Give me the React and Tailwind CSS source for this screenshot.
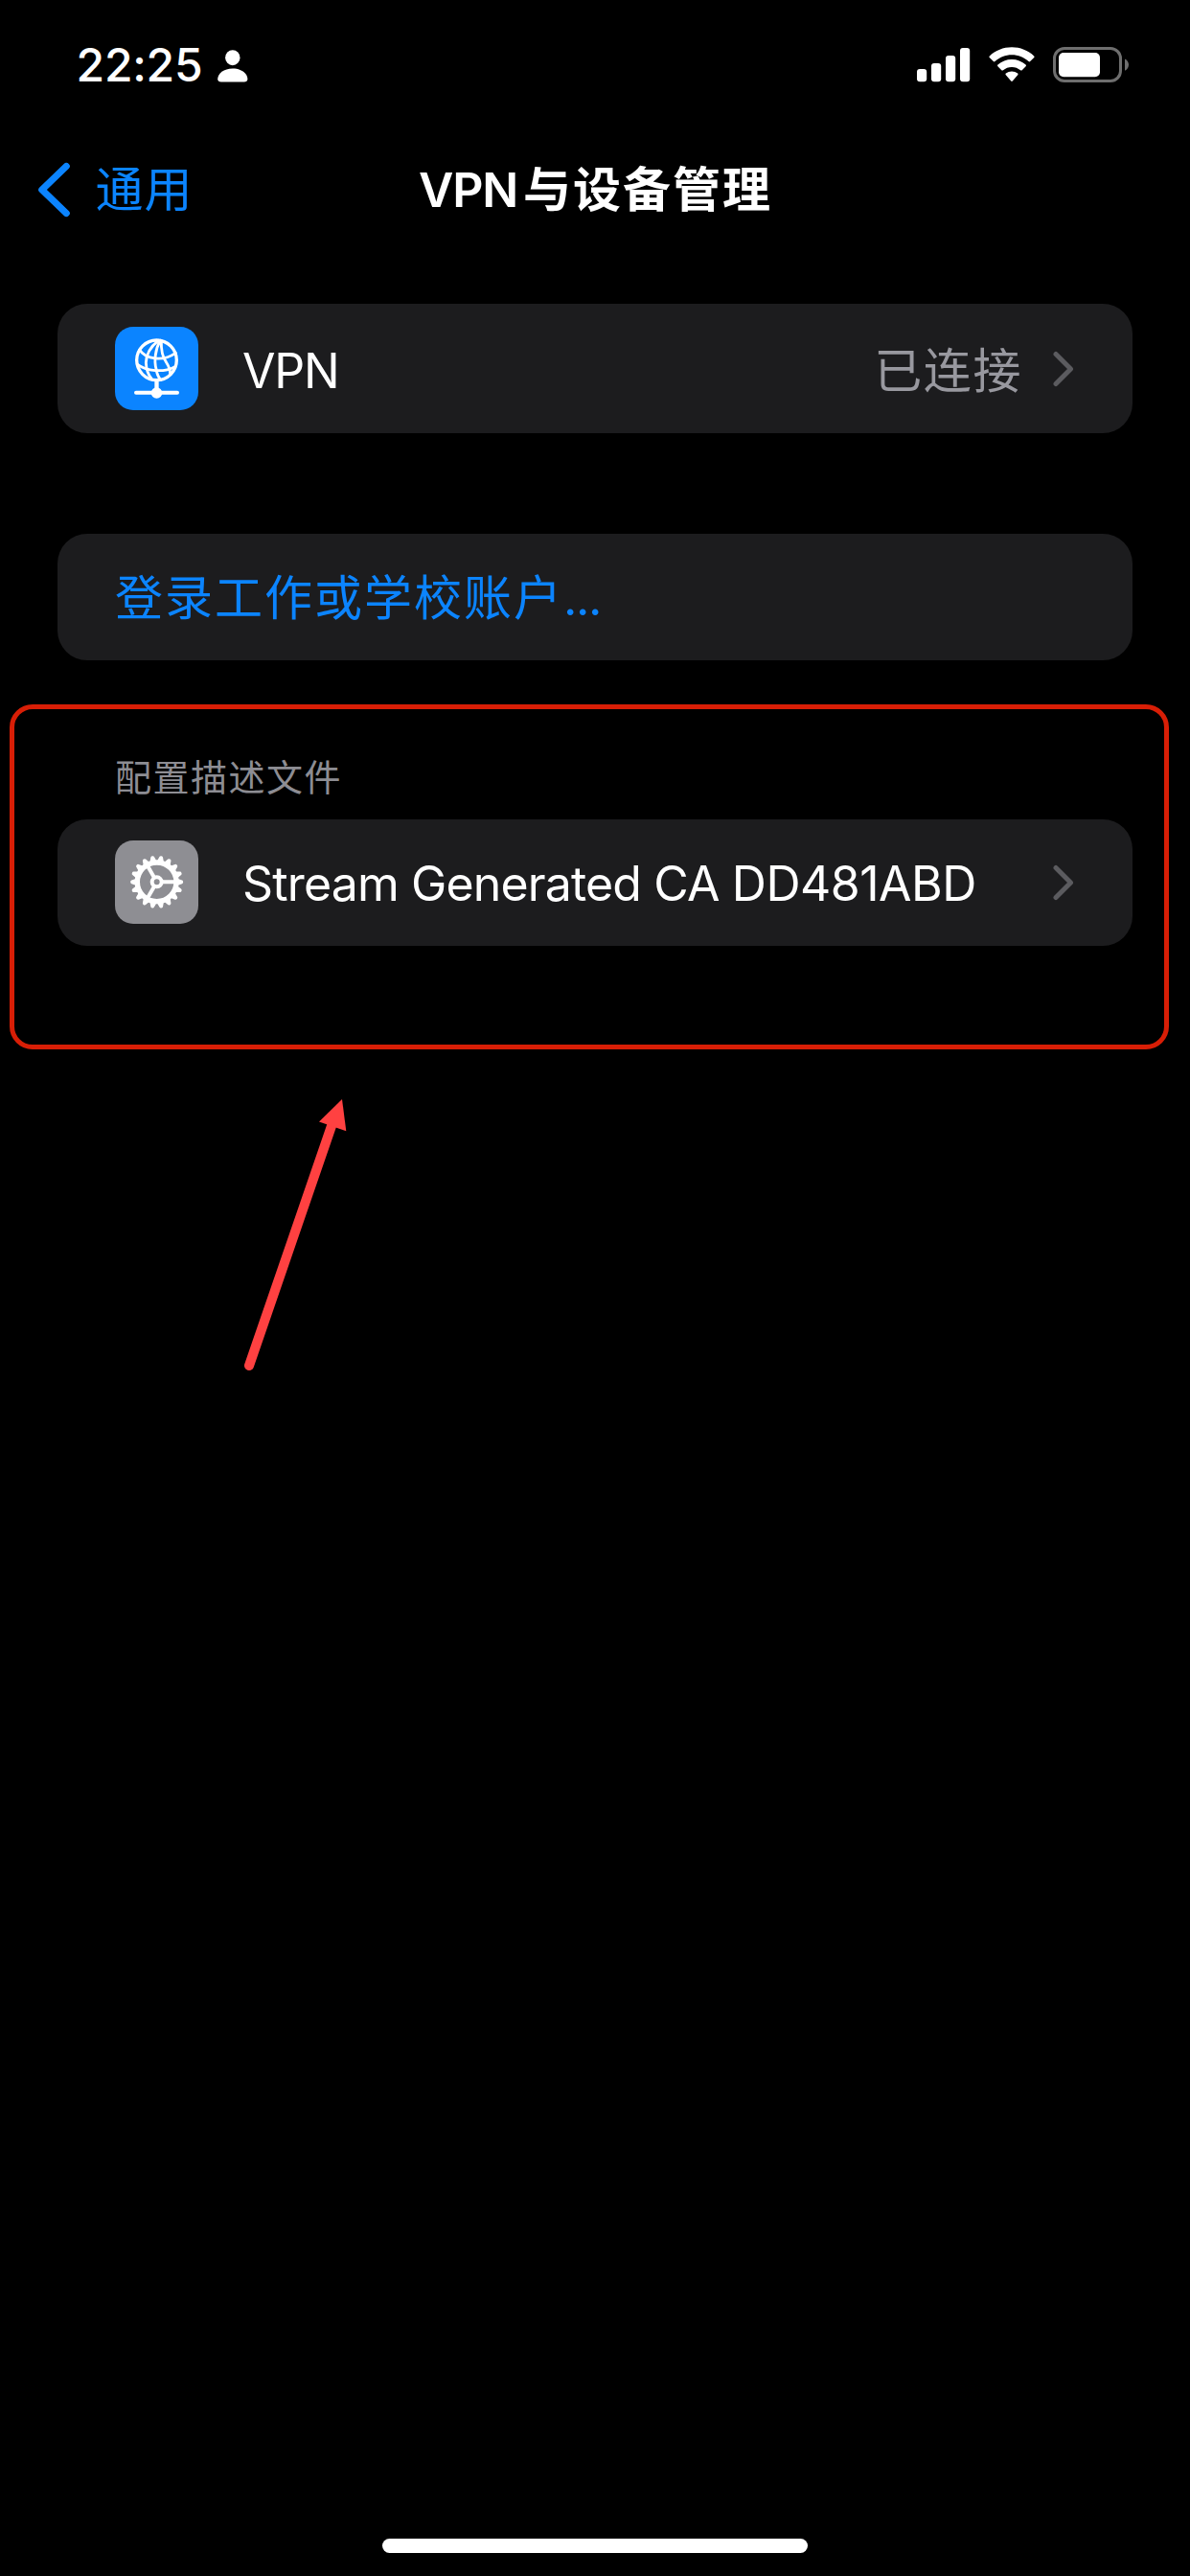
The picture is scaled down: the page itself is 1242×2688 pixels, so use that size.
const FONT = "font-[Inter,'Noto_Sans_CJK_SC',sans-serif]";

function PersonIcon() {
  return (
    <svg width="32" height="34" viewBox="0 0 32 34" fill="#fff" className="mt-[51.5px]">
      <ellipse cx="15.8" cy="8.2" rx="7.7" ry="8" />
      <path d="M0.2 30.6C0.2 24.6 6.6 19.4 15.8 19.4S31.4 24.6 31.4 30.6C31.4 32.6 30 33.6 27.8 33.6H3.8C1.6 33.6 0.2 32.6 0.2 30.6Z" />
    </svg>
  );
}

function SignalIcon() {
  return (
    <svg width="56" height="36" viewBox="0 0 56 36" fill="#fff">
      <rect x="0" y="22" width="10.2" height="13.2" rx="3" />
      <rect x="15" y="16" width="10.2" height="19.2" rx="3" />
      <rect x="30" y="8" width="10.2" height="27.2" rx="3" />
      <rect x="45" y="0" width="10.2" height="35.2" rx="3" />
    </svg>
  );
}

function WifiIcon() {
  return (
    <svg width="48" height="37" viewBox="0 0 48 37" fill="#fff">
      <path d="M24 0.2C32.8 0.2 41 3.5 47.2 9.4C47.7 9.9 47.7 10.6 47.3 11.1L43.2 15.1C42.7 15.6 42 15.6 41.5 15.1C36.8 10.7 30.6 8.2 24 8.2S11.2 10.7 6.5 15.1C6 15.6 5.3 15.6 4.8 15.1L0.7 11.1C0.3 10.6 0.3 9.9 0.8 9.4C7 3.5 15.2 0.2 24 0.2Z" />
      <path d="M24 13C29.5 13 34.6 15 38.6 18.6C39.1 19.1 39.1 19.8 38.6 20.3L34.7 24.2C34.2 24.7 33.5 24.7 33 24.3C30.5 22.1 27.4 20.9 24 20.9S17.5 22.1 15 24.3C14.5 24.7 13.8 24.7 13.3 24.2L9.4 20.3C8.9 19.8 8.9 19.1 9.4 18.6C13.4 15 18.5 13 24 13Z" />
      <path d="M24 25.6C26.3 25.6 28.4 26.3 30.1 27.6C30.6 28 30.7 28.7 30.2 29.2L24.8 35.6C24.4 36.1 23.6 36.1 23.2 35.6L17.8 29.2C17.3 28.7 17.4 28 17.9 27.6C19.6 26.3 21.7 25.6 24 25.6Z" />
    </svg>
  );
}

function BatteryIcon() {
  return (
    <svg width="80" height="38" viewBox="0 0 80 38">
      <rect x="1.5" y="1.5" width="69" height="34" rx="10.5" fill="none" stroke="#6e6e6e" strokeWidth="3" />
      <rect x="6" y="6" width="43" height="25.3" rx="5" fill="#fff" />
      <path d="M75 12.4C77.4 13.4 79 15.8 79 18.6S77.4 23.8 75 24.8Z" fill="#6e6e6e" />
    </svg>
  );
}

function GlobeTile() {
  return (
    <svg width="87" height="87" viewBox="0 0 261 261" className="rounded-[19px] bg-[#0b84ff]">
      <g fill="none" stroke="#fff" strokeWidth="8.5" strokeLinecap="round">
        <circle cx="130.5" cy="104.5" r="62.5" strokeWidth="10" />
        <path d="M136 43C114 60 98 84 97 112C98 134 104 150 114 162" />
        <path d="M142 43C126 70 122 108 129 132C131 146 136 158 143 166" />
        <path d="M145 43C144 72 147 92 160 110C168 122 173 136 173 148" />
        <path d="M77 72C96 102 150 110 190 82" />
        <path d="M70 117C98 140 152 144 188 125" />
      </g>
      <path d="M130.5 168V206" stroke="#fff" strokeWidth="13" />
      <path d="M66 206.5H195" stroke="#fff" strokeWidth="12" strokeLinecap="round" />
      <circle cx="130.5" cy="207" r="17.5" fill="#fff" />
    </svg>
  );
}

const TEETH = Array.from({ length: 18 }, (_, i) => i * 20);

function GearTile() {
  return (
    <svg width="87" height="87" viewBox="-131 -130 261 261" className="mb-px rounded-[19px] bg-[#8e8e93]">
      <g fill="#fff">
        {TEETH.map((a) => (
          <path key={a} d="M64 -11L79 -5.5Q82.5 -4.5 82.5 0T79 5.5L64 11Z" transform={`rotate(${a})`} />
        ))}
      </g>
      <circle r="61" fill="none" stroke="#fff" strokeWidth="16" />
      <g stroke="#fff" strokeWidth="12">
        <path d="M16 0H58" />
        <path d="M16 0H58" transform="rotate(120)" />
        <path d="M16 0H58" transform="rotate(240)" />
      </g>
      <circle r="15" fill="none" stroke="#fff" strokeWidth="12" />
    </svg>
  );
}

function Chevron() {
  return (
    <svg width="22" height="38" viewBox="0 0 22 38" fill="none" stroke="#5b5b5f" strokeWidth="5" strokeLinecap="round" strokeLinejoin="round">
      <path d="M3 3.5L18.5 19L3 34.5" />
    </svg>
  );
}

function Card({ className, children }) {
  return (
    <div className={`flex w-[1122px] items-center rounded-[31px] bg-[#1c1c1e] pl-[60px] pr-[61px] ${className}`}>
      {children}
    </div>
  );
}

export default function App() {
  return (
    <div className={`flex h-[2688px] w-[1242px] flex-col overflow-hidden bg-black whitespace-nowrap text-white ${FONT}`}>
      <header className="flex h-[135px] items-start pl-[79.5px]">
        <div className="mt-[44px] w-[147.5px] text-[48px] leading-[48px] font-medium tracking-[-0.2px]">22:25</div>
        <PersonIcon />
        <div className="mt-[49px] ml-auto mr-[63px] flex items-start">
          <div className="mt-px mr-[19px]">
            <SignalIcon />
          </div>
          <div className="mr-[19px]">
            <WifiIcon />
          </div>
          <BatteryIcon />
        </div>
      </header>

      <nav className="flex h-[182px] items-start pl-[38px]">
        <div className="flex w-[399px] items-start text-[#0b84ff]">
          <svg width="38" height="60" viewBox="0 0 38 60" className="mt-[33px]" fill="none" stroke="#0b84ff" strokeWidth="7.2" strokeLinecap="round" strokeLinejoin="round">
            <path d="M31.2 5.5L5.8 30L31.2 54.5" />
          </svg>
          <span className="mt-[38px] ml-[23.5px] text-[50px] leading-[50px] tracking-[1px]">通用</span>
        </div>
        <h1 className="mt-[38px] flex text-[50px] leading-[50px] font-semibold">
          <span className="tracking-[-1.2px]">VPN</span>
          <span className="ml-[6px] tracking-[2px]">与设备管理</span>
        </h1>
      </nav>

      <main className="flex flex-col items-start">
        <Card className="ml-[60px] h-[135px]">
          <GlobeTile />
          <span className="mt-[5px] ml-[46px] text-[50px] leading-[50px] tracking-[-1.2px]">VPN</span>
          <span className="mt-[5px] ml-auto mr-[32px] text-[50px] leading-[50px] tracking-[1.6px] text-[#98989f]">已连接</span>
          <Chevron />
        </Card>

        <Card className="mt-[105px] ml-[60px] h-[132px] text-[#0b84ff]">
          <span className="mt-[2px] text-[50px] leading-[50px] tracking-[2px]">登录工作或学校账户</span>
          <span className="mt-[2px] text-[50px] leading-[50px] tracking-[-1.4px]">...</span>
        </Card>

        <section className="mt-[46px] ml-[10px] h-[360px] w-[1210px] rounded-[24px] border-[5px] border-[#d81e06] pt-[51px] pl-[45px]">
          <h2 className="ml-[60px] text-[38px] leading-[40px] tracking-[1.5px] text-[#8d8d93]">配置描述文件</h2>
          <Card className="mt-[24px] h-[132px]">
            <GearTile />
            <span className="mt-[2px] ml-[46px] mr-auto text-[50px] leading-[50px] tracking-[-0.85px]">
              Stream Generated CA <span className="tracking-[-0.5px]">DD481ABD</span>
            </span>
            <Chevron />
          </Card>
        </section>

        <svg width="140" height="300" viewBox="240 1140 140 300" className="mt-[45px] ml-[240px]">
          <path d="M260 1425L347 1172" stroke="#ff4141" strokeWidth="10" strokeLinecap="round" />
          <path d="M357 1147L361.3 1180.3L333 1170.5Z" fill="#ff4141" />
        </svg>
      </main>

      <div className="mt-auto mb-[24px] ml-[399px] h-[15px] w-[444px] shrink-0 rounded-full bg-white" />
    </div>
  );
}
